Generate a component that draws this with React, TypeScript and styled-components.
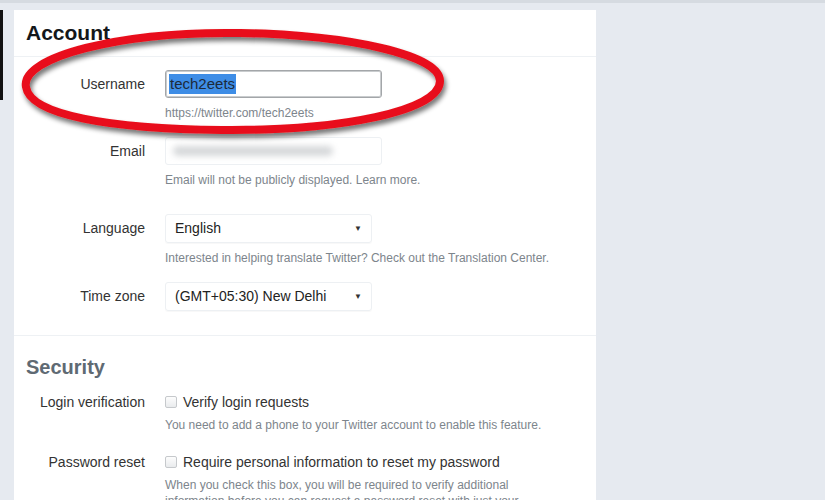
import { FC } from "react";
import styled, { createGlobalStyle } from "styled-components";

const Global = createGlobalStyle`
  html, body {
    margin: 0;
    padding: 0;
    background: #e6eaf0;
    font-family: "Liberation Sans", Arial, sans-serif;
    overflow: hidden;
  }
`;

interface RowProps {
  label: string;
  gap?: number;
}

const Row: FC<RowProps & { children: React.ReactNode }> = ({ label, gap = 16, children }) => {
  return (
    <FieldRow $gap={gap}>
      <Label>{label}</Label>
      <Field>{children}</Field>
    </FieldRow>
  );
};

const CheckRow: FC<RowProps & { text: string; children: React.ReactNode }> = ({ label, gap = 21, text, children }) => {
  return (
    <CheckFieldRow $gap={gap}>
      <CheckLabel>{label}</CheckLabel>
      <Field>
        <CheckLine>
          <Box type="checkbox" readOnly />
          {text}
        </CheckLine>
        <Help>{children}</Help>
      </Field>
    </CheckFieldRow>
  );
};

const Ellipse: FC = () => (
  <Scribble width="470" height="150" viewBox="0 0 470 150">
    <defs>
      <filter id="shade" x="-10%" y="-20%" width="120%" height="150%">
        <feGaussianBlur in="SourceAlpha" stdDeviation="2.5" />
        <feOffset dx="2" dy="4" result="b" />
        <feComponentTransfer>
          <feFuncA type="linear" slope="0.55" />
        </feComponentTransfer>
        <feMerge>
          <feMergeNode />
          <feMergeNode in="SourceGraphic" />
        </feMerge>
      </filter>
    </defs>
    <g filter="url(#shade)">
      <path
        d="M26 84 C 20 54, 120 28, 240 30 C 350 32, 440 52, 440 78 C 440 108, 340 128, 222 127 C 110 126, 30 112, 26 84 Z"
        fill="none"
        stroke="#e8101a"
        strokeWidth="8"
        strokeLinejoin="round"
      />
    </g>
  </Scribble>
);

export default function App() {
  return (
    <>
      <Global />
      <TopEdge />
      <Page>
        <Rail>
          <RailEdge />
        </Rail>
        <Card>
          <Heading>Account</Heading>
          <Form>
            <Row label="Username">
              <TextInput>
                <Selected>tech2eets</Selected>
              </TextInput>
              <Help>https://twitter.com/tech2eets</Help>
            </Row>
            <Row label="Email" gap={26}>
              <TextInput $soft>
                <Blur />
              </TextInput>
              <Help>Email will not be publicly displayed. Learn more.</Help>
            </Row>
            <Row label="Language">
              <Select>
                English
                <Caret>▼</Caret>
              </Select>
              <Help>Interested in helping translate Twitter? Check out the Translation Center.</Help>
            </Row>
            <Row label="Time zone" gap={0}>
              <Select>
                (GMT+05:30) New Delhi
                <Caret>▼</Caret>
              </Select>
            </Row>
          </Form>
          <Divider />
          <SubHeading>Security</SubHeading>
          <Form $top={15}>
            <CheckRow label="Login verification" text="Verify login requests">
              You need to add a phone to your Twitter account to enable this feature.
            </CheckRow>
            <CheckRow label="Password reset" text="Require personal information to reset my password" gap={0}>
              When you check this box, you will be required to verify additional
              <br />
              information before you can request a password reset with just your
            </CheckRow>
          </Form>
        </Card>
        <Ellipse />
      </Page>
    </>
  );
}

const TopEdge = styled.div`
  height: 3px;
  background: #d6dbe1;
`;

const Page = styled.div`
  position: relative;
  display: flex;
  align-items: flex-start;
  height: 497px;
  padding-top: 7px;
  box-sizing: border-box;
`;

const Rail = styled.div`
  width: 14px;
  flex-shrink: 0;
  align-self: stretch;
`;

const RailEdge = styled.div`
  width: 3px;
  height: 90px;
  background: #111;
`;

const Card = styled.div`
  width: 582px;
  height: 520px;
  background: #fff;
  flex-shrink: 0;
`;

const Heading = styled.h2`
  margin: 0;
  height: 46px;
  line-height: 46px;
  padding: 0 12px;
  font-size: 21px;
  font-weight: bold;
  color: #14171a;
  border-bottom: 1px solid #eef1f4;
`;

const SubHeading = styled.h2`
  margin: 0;
  padding: 19px 12px 0;
  font-size: 20px;
  line-height: 24px;
  font-weight: bold;
  color: #5f6a73;
`;

const Form = styled.div<{ $top?: number }>`
  padding: ${(p) => p.$top ?? 13}px 12px 0;
`;

const FieldRow = styled.div<{ $gap: number }>`
  display: grid;
  grid-template-columns: 119px 1fr;
  column-gap: 20px;
  margin-bottom: ${(p) => p.$gap}px;
`;

const CheckFieldRow = styled(FieldRow)``;

const Label = styled.div`
  text-align: right;
  font-size: 14px;
  line-height: 28px;
  color: #333;
`;

const CheckLabel = styled(Label)`
  line-height: 16px;
`;

const Field = styled.div`
  display: flex;
  flex-direction: column;
  align-items: flex-start;
`;

const TextInput = styled.div<{ $soft?: boolean }>`
  width: 217px;
  height: 28px;
  box-sizing: border-box;
  border: 1px solid ${(p) => (p.$soft ? "#edf0f3" : "#a3a6a9")};
  box-shadow: ${(p) => (p.$soft ? "none" : "inset 0 0 0 1px #c9ccce")};
  border-radius: 3px;
  display: flex;
  align-items: center;
  padding: 0 3px;
`;

const Selected = styled.span`
  background: #3e8de6;
  color: #1c2a3a;
  font-size: 15px;
  line-height: 20px;
  padding: 0 1px;
`;

const Blur = styled.span`
  display: block;
  width: 160px;
  height: 10px;
  margin-left: 4px;
  background: #d6d8da;
  border-radius: 5px;
  filter: blur(3px);
`;

const Select = styled.div`
  position: relative;
  width: 207px;
  height: 29px;
  box-sizing: border-box;
  border: 1px solid #edf0f3;
  border-radius: 3px;
  box-shadow: 0 1px 1px rgba(0, 0, 0, 0.03);
  padding: 0 9px;
  font-size: 14px;
  line-height: 27px;
  color: #222;
  display: flex;
  justify-content: space-between;
`;

const Caret = styled.span`
  font-size: 8px;
  color: #333;
`;

const Help = styled.div<{ $top?: number }>`
  margin-top: ${(p) => p.$top ?? 7}px;
  font-size: 12px;
  line-height: 16px;
  color: #7d858c;
`;

const Divider = styled.div`
  margin-top: 24px;
  border-top: 1px solid #eef1f4;
`;

const CheckLine = styled.label`
  display: flex;
  align-items: center;
  gap: 6px;
  font-size: 14px;
  line-height: 16px;
  color: #333;
`;

const Box = styled.input`
  appearance: none;
  margin: 0;
  width: 12px;
  height: 12px;
  border: 1px solid #c6c9cc;
  border-radius: 2px;
  background: linear-gradient(#fdfdfd, #e9ebed);
`;

const Scribble = styled.svg`
  position: absolute;
  left: 0;
  top: 0;
  pointer-events: none;
`;
